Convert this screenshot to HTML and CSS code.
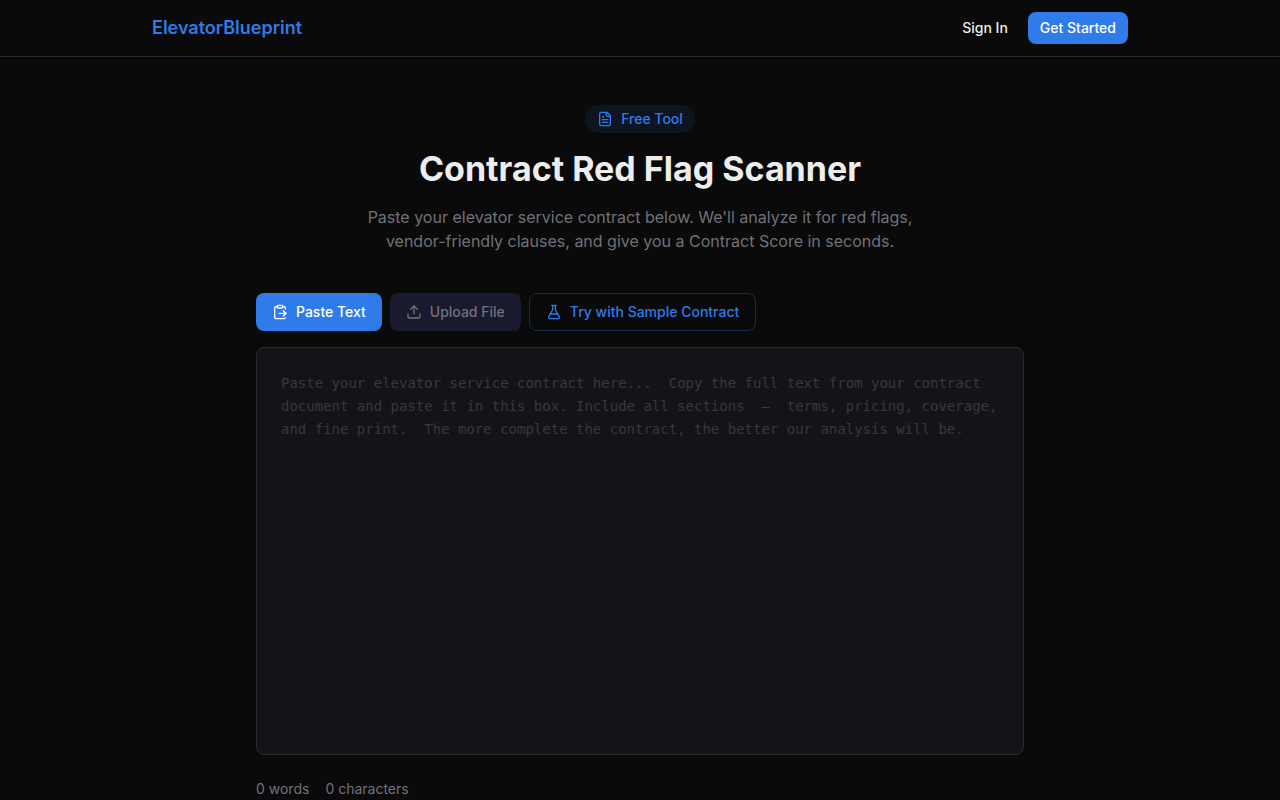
FILE: index.html
```html
<!DOCTYPE html>
<html lang="en">
<head>
    <meta charset="UTF-8">
    <meta name="viewport" content="width=device-width, initial-scale=1.0">
    <title>Contract Red Flag Scanner</title>
    <link rel="stylesheet" href="styles.css">
</head>
<body>
    <header class="header">
        <nav class="nav">
            <a class="logo" href="#">ElevatorBlueprint</a>
            <div class="nav-links">
                <a class="nav-link" href="#">Sign In</a>
                <a class="nav-link primary" href="#">Get Started</a>
            </div>
        </nav>
    </header>

    <main class="main">
        <section class="intro">
            <span class="badge">
                <svg class="icon" viewBox="0 0 24 24" aria-hidden="true">
                    <path d="M15 2H6a2 2 0 0 0-2 2v16a2 2 0 0 0 2 2h12a2 2 0 0 0 2-2V7Z"/>
                    <path d="M14 2v4a2 2 0 0 0 2 2h4"/>
                    <path d="M10 9H8"/>
                    <path d="M16 13H8"/>
                    <path d="M16 17H8"/>
                </svg>
                Free Tool
            </span>
            <h1 class="title">Contract Red Flag Scanner</h1>
            <p class="subtitle">Paste your elevator service contract below. We'll analyze it for red flags, vendor-friendly clauses, and give you a Contract Score in seconds.</p>
        </section>

        <div class="tabs">
            <button class="tab active" type="button">
                <svg class="icon" viewBox="0 0 24 24" aria-hidden="true">
                    <path d="M11 14h10"/>
                    <path d="M16 4h2a2 2 0 0 1 2 2v1.344"/>
                    <path d="m17 18 4-4-4-4"/>
                    <path d="M8 4H6a2 2 0 0 0-2 2v14a2 2 0 0 0 2 2h12a2 2 0 0 0 1.793-1.113"/>
                    <rect x="8" y="2" width="8" height="4" rx="1"/>
                </svg>
                Paste Text
            </button>
            <button class="tab" type="button">
                <svg class="icon" viewBox="0 0 24 24" aria-hidden="true">
                    <path d="M12 3v12"/>
                    <path d="m17 8-5-5-5 5"/>
                    <path d="M21 15v4a2 2 0 0 1-2 2H5a2 2 0 0 1-2-2v-4"/>
                </svg>
                Upload File
            </button>
            <button class="tab outline" type="button">
                <svg class="icon" viewBox="0 0 24 24" aria-hidden="true">
                    <path d="M14 2v6a2 2 0 0 0 .245.96l5.51 10.08A2 2 0 0 1 18 22H6a2 2 0 0 1-1.755-2.96l5.51-10.08A2 2 0 0 0 10 8V2"/>
                    <path d="M6.453 15h11.094"/>
                    <path d="M8.5 2h7"/>
                </svg>
                Try with Sample Contract
            </button>
        </div>

        <textarea class="contract" id="contractText" aria-label="Contract text" spellcheck="false" placeholder="Paste your elevator service contract here...  Copy the full text from your contract document and paste it in this box. Include all sections  –  terms, pricing, coverage, and fine print.  The more complete the contract, the better our analysis will be."></textarea>

        <div class="counts">
            <span id="wordCount">0 words</span>
            <span id="charCount">0 characters</span>
        </div>
    </main>

    <script>
        contractText.addEventListener('input', () => {
            let text = contractText.value;
            let words = text.split(/\s+/).filter(Boolean).length;
            wordCount.textContent = `${words} words`;
            charCount.textContent = `${text.length} characters`;
        });
    </script>
</body>
</html>
```
FILE: styles.css
```css
*, *::before, *::after{
    box-sizing: border-box;
    margin: 0;
    padding: 0;
}

body{
    background: #0a0a0a;
    color: #ededed;
    font-family: Inter, "Liberation Sans", sans-serif;
    font-size: 14px;
    line-height: 20px;
}

a{
    color: inherit;
    text-decoration: none;
}

.icon{
    width: 16px;
    height: 16px;
    flex: none;
    fill: none;
    stroke: currentColor;
    stroke-width: 2;
    stroke-linecap: round;
    stroke-linejoin: round;
}

.header{
    border-bottom: 1px solid #2a2a2e;
}

.nav{
    display: flex;
    align-items: center;
    justify-content: space-between;
    max-width: 1024px;
    margin: 0 auto;
    padding: 12px 24px;
}

.logo{
    color: #2f7bea;
    font-size: 18px;
    font-weight: 600;
}

.nav-links{
    display: flex;
    gap: 8px;
}

.nav-link{
    padding: 6px 12px;
    border-radius: 8px;
    font-weight: 500;
}

.nav-link.primary{
    background: #2f7bea;
    color: #fff;
}

.main{
    max-width: 816px;
    margin: 0 auto;
    padding: 48px 24px 0;
}

.intro{
    display: flex;
    flex-direction: column;
    align-items: center;
    text-align: center;
    margin-bottom: 40px;
}

.badge{
    display: flex;
    align-items: center;
    gap: 8px;
    margin-bottom: 16px;
    padding: 4px 12px;
    border-radius: 14px;
    background: #0e1520;
    color: #2f7bea;
    font-weight: 500;
}

.title{
    margin-bottom: 16px;
    font-size: 34px;
    font-weight: 700;
    line-height: 40px;
}

.subtitle{
    max-width: 576px;
    color: #71717a;
    font-size: 16px;
    line-height: 24px;
}

.tabs{
    display: flex;
    flex-wrap: wrap;
    gap: 8px;
    margin-bottom: 16px;
}

.tab{
    display: flex;
    align-items: center;
    gap: 8px;
    padding: 9px 16px;
    border: 0;
    border-radius: 8px;
    background: #1a1a2e;
    color: #71717a;
    font: inherit;
    font-weight: 500;
    cursor: pointer;
}

.tab.active{
    background: #2f7bea;
    color: #fff;
}

.tab.outline{
    padding: 8px 16px;
    border: 1px solid #152c4d;
    background: transparent;
    color: #2f7bea;
}

.contract{
    display: block;
    width: 100%;
    height: 408px;
    padding: 24px;
    border: 1px solid #2a2a2e;
    border-radius: 8px;
    outline: none;
    resize: none;
    background: #141418;
    color: #ededed;
    font-family: "DejaVu Sans Mono", monospace;
    font-size: 14px;
    line-height: 23px;
}

.contract::placeholder{
    color: #38383d;
}

.counts{
    display: flex;
    gap: 16px;
    margin-top: 24px;
    color: #71717a;
}
```
